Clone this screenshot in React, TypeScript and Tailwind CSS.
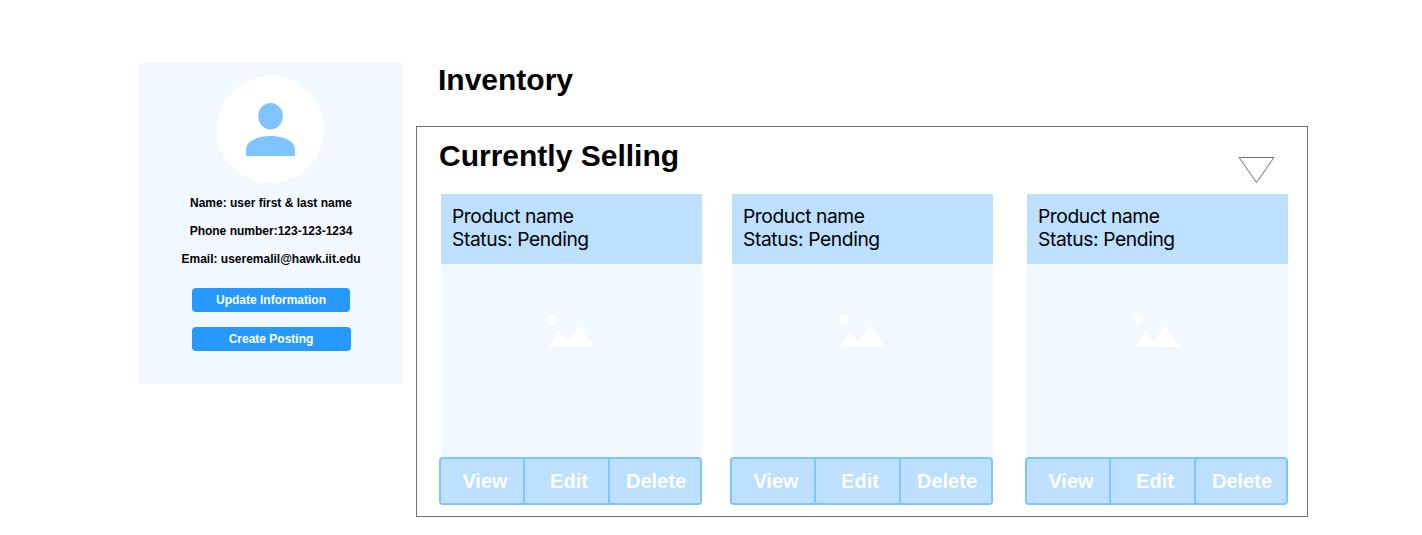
const products = [
  { name: "Product name", status: "Pending", gap: "" },
  { name: "Product name", status: "Pending", gap: "ml-[30px]" },
  { name: "Product name", status: "Pending", gap: "ml-[34px]" },
];

function ProfileCard() {
  return (
    <aside className="flex h-[321px] w-[264px] shrink-0 flex-col items-center bg-[#f1f8ff] pt-[13px]">
      <div className="mr-[2px] flex size-[107px] shrink-0 items-center justify-center rounded-full bg-white">
        <svg width="49" height="53" viewBox="0 0 49 53" fill="#80c4ff">
          <ellipse cx="24.5" cy="13.2" rx="12.3" ry="13.2" />
          <path d="M0 53V46.5C0 37.8 12 33 24.5 33S49 37.8 49 46.5V53Z" />
        </svg>
      </div>
      <div className="mt-[6px] flex flex-col items-center text-[12px] leading-[28px] font-bold text-black">
        <p>Name: user first &amp; last name</p>
        <p>Phone number:123-123-1234</p>
        <p>Email: useremalil@hawk.iit.edu</p>
      </div>
      <div className="mt-[15px] flex w-[159px] flex-col items-start gap-[15px] text-[12px] font-bold text-white">
        <button className="h-6 w-[158px] rounded bg-[#2699ff] pl-px">Update Information</button>
        <button className="h-6 w-[159px] rounded bg-[#2699ff]">Create Posting</button>
      </div>
    </aside>
  );
}

function ProductCard({ name, status, gap }: { name: string; status: string; gap: string }) {
  return (
    <article className={`flex w-[261px] shrink-0 flex-col ${gap}`}>
      <header className="h-[70px] bg-[#bde0ff] pt-[11px] pl-[11px] font-['Inter'] text-[19.25px] leading-[23px] tracking-[-0.46px] text-black">
        <p>{name}</p>
        <p className="tracking-[-0.4px]">Status: {status}</p>
      </header>
      <div className="flex h-[193px] justify-center bg-[#f1f8ff] pt-[51px]">
        <svg className="mr-[2px]" width="48" height="33" viewBox="0 0 48 33" fill="white">
          <circle cx="5.5" cy="4.6" r="4.6" />
          <path d="M1.5 32L12.2 16.3L20.3 27L32.5 10L47.5 32Z" />
        </svg>
      </div>
      <div className="-ml-[2px] flex h-12 text-[20px] font-bold text-white">
        <button className="w-[92px] rounded border-2 border-[#80c4ff] bg-[#bde0ff]">View</button>
        <button className="z-10 -ml-2 w-[92px] rounded border-2 border-[#80c4ff] bg-[#bde0ff]">Edit</button>
        <button className="z-20 -ml-[7px] w-[94px] rounded border-2 border-[#80c4ff] bg-[#bde0ff] pl-[2px]">Delete</button>
      </div>
    </article>
  );
}

export default function App() {
  return (
    <main className="flex h-[535px] w-[1422px] items-start overflow-hidden bg-white pt-[63px] pl-[139px] font-['Liberation_Sans',Arial,sans-serif]">
      <ProfileCard />
      <section className="ml-[13px] w-[892px]">
        <h1 className="h-[63px] pl-[22px] text-[30px] leading-[34px] font-bold text-black">Inventory</h1>
        <div className="h-[391px] border border-[#707070] pl-[24px]">
          <div className="flex h-[67px] justify-between pr-[32px]">
            <h2 className="-ml-[2px] pt-[12px] text-[30px] leading-[34px] font-bold text-black">Currently Selling</h2>
            <svg className="mt-[30px]" width="37" height="27" viewBox="0 0 37 27" fill="none" stroke="#707070">
              <path d="M1 0.5H36L18.5 25.5Z" />
            </svg>
          </div>
          <div className="flex">
            {products.map((product, index) => (
              <ProductCard key={index} {...product} />
            ))}
          </div>
        </div>
      </section>
    </main>
  );
}
